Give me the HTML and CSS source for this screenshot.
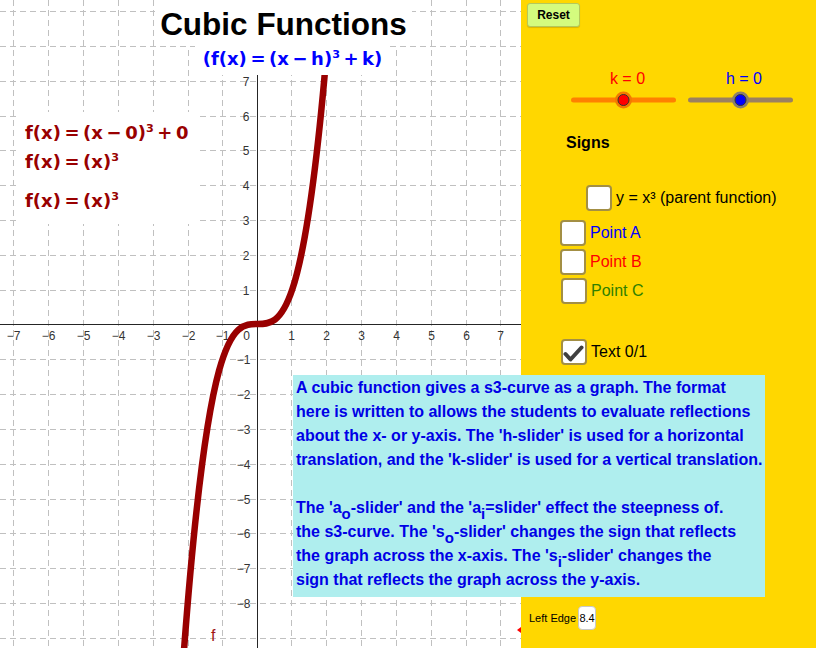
FILE: index.html
```html
<!DOCTYPE html>
<html>
<head>
<meta charset="utf-8">
<title>Cubic Functions</title>
<link rel="stylesheet" href="styles.css">
</head>
<body>
<div class="app">
  <div class="graph">
    <svg class="canvas" width="521" height="648" viewBox="0 0 521 648">
      <g class="grid">
        <line x1="13.5" y1="0" x2="13.5" y2="648"/>
        <line x1="48.5" y1="0" x2="48.5" y2="648"/>
        <line x1="83.5" y1="0" x2="83.5" y2="648"/>
        <line x1="118.5" y1="0" x2="118.5" y2="648"/>
        <line x1="153.5" y1="0" x2="153.5" y2="648"/>
        <line x1="188.5" y1="0" x2="188.5" y2="648"/>
        <line x1="222.5" y1="0" x2="222.5" y2="648"/>
        <line x1="291.5" y1="0" x2="291.5" y2="648"/>
        <line x1="326.5" y1="0" x2="326.5" y2="648"/>
        <line x1="361.5" y1="0" x2="361.5" y2="648"/>
        <line x1="396.5" y1="0" x2="396.5" y2="648"/>
        <line x1="431.5" y1="0" x2="431.5" y2="648"/>
        <line x1="466.5" y1="0" x2="466.5" y2="648"/>
        <line x1="500.5" y1="0" x2="500.5" y2="648"/>
        <line x1="0" y1="11.5" x2="521" y2="11.5"/>
        <line x1="0" y1="46.5" x2="521" y2="46.5"/>
        <line x1="0" y1="81.5" x2="521" y2="81.5"/>
        <line x1="0" y1="116.5" x2="521" y2="116.5"/>
        <line x1="0" y1="150.5" x2="521" y2="150.5"/>
        <line x1="0" y1="185.5" x2="521" y2="185.5"/>
        <line x1="0" y1="220.5" x2="521" y2="220.5"/>
        <line x1="0" y1="255.5" x2="521" y2="255.5"/>
        <line x1="0" y1="290.5" x2="521" y2="290.5"/>
        <line x1="0" y1="359.5" x2="521" y2="359.5"/>
        <line x1="0" y1="394.5" x2="521" y2="394.5"/>
        <line x1="0" y1="429.5" x2="521" y2="429.5"/>
        <line x1="0" y1="464.5" x2="521" y2="464.5"/>
        <line x1="0" y1="499.5" x2="521" y2="499.5"/>
        <line x1="0" y1="533.5" x2="521" y2="533.5"/>
        <line x1="0" y1="568.5" x2="521" y2="568.5"/>
        <line x1="0" y1="603.5" x2="521" y2="603.5"/>
        <line x1="0" y1="638.5" x2="521" y2="638.5"/>
      </g>
      <g class="axes">
        <line x1="0" y1="324.5" x2="521" y2="324.5"/>
        <line x1="257.5" y1="0" x2="257.5" y2="648"/>
      </g>
      <g class="xlabels">
        <text x="13.5" y="340">−7</text>
        <text x="48.5" y="340">−6</text>
        <text x="83.5" y="340">−5</text>
        <text x="118.5" y="340">−4</text>
        <text x="153.5" y="340">−3</text>
        <text x="188.5" y="340">−2</text>
        <text x="222.5" y="340">−1</text>
        <text x="246.5" y="340">0</text>
        <text x="291.5" y="340">1</text>
        <text x="326.5" y="340">2</text>
        <text x="361.5" y="340">3</text>
        <text x="396.5" y="340">4</text>
        <text x="431.5" y="340">5</text>
        <text x="466.5" y="340">6</text>
        <text x="500.5" y="340">7</text>
      </g>
      <g class="ylabels">
        <text x="249.5" y="86">7</text>
        <text x="249.5" y="121">6</text>
        <text x="249.5" y="155">5</text>
        <text x="249.5" y="190">4</text>
        <text x="249.5" y="225">3</text>
        <text x="249.5" y="260">2</text>
        <text x="249.5" y="295">1</text>
        <text x="250.5" y="364">−1</text>
        <text x="250.5" y="399">−2</text>
        <text x="250.5" y="434">−3</text>
        <text x="250.5" y="469">−4</text>
        <text x="250.5" y="504">−5</text>
        <text x="250.5" y="538">−6</text>
        <text x="250.5" y="573">−7</text>
        <text x="250.5" y="608">−8</text>
      </g>
      <path class="curve" d="M180.72 695.6 C229.58 -13.8 278.44 631.1 327.3 44.8"/>
      <text class="flabel" x="211" y="641">f</text>
      <path class="marker" d="M517 630 L521 627 L521 633 Z"/>
    </svg>

    <div class="title">Cubic Functions</div>
    <div class="main-formula">(f(x) = (x − h)<sup>3</sup> + k)</div>
    <div class="formulas">
      <div class="fline">f(x) = (x − 0)<sup>3</sup> + 0</div>
      <div class="fline">f(x) = (x)<sup>3</sup></div>
      <div class="fline third">f(x) = (x)<sup>3</sup></div>
    </div>
  </div>

  <div class="panel">
    <button class="reset">Reset</button>
    <div class="sliders">
      <div class="slider">
        <div class="slabel k">k = 0</div>
        <svg class="track" width="105" height="24" viewBox="0 0 105 24">
          <line class="k-line" x1="2.5" y1="12" x2="102.5" y2="12"/>
          <circle class="k-halo" cx="52.5" cy="12" r="8.5"/>
          <circle class="k-dot" cx="52.5" cy="12" r="5.5"/>
        </svg>
      </div>
      <div class="slider">
        <div class="slabel h">h = 0</div>
        <svg class="track" width="105" height="24" viewBox="0 0 105 24">
          <line class="h-line" x1="2.5" y1="12" x2="102.5" y2="12"/>
          <circle class="h-halo" cx="52.5" cy="12" r="8.5"/>
          <circle class="h-dot" cx="52.5" cy="12" r="5.5"/>
        </svg>
      </div>
    </div>
    <div class="signs">Signs</div>

    <div class="row parent"><span class="cb"></span><span class="lbl">y = x³ (parent function)</span></div>
    <div class="row pa"><span class="cb"></span><span class="lbl blue">Point A</span></div>
    <div class="row pb"><span class="cb"></span><span class="lbl red">Point B</span></div>
    <div class="row pc"><span class="cb"></span><span class="lbl green">Point C</span></div>
    <div class="row ptext"><span class="cb"><svg width="22" height="22" viewBox="0 0 22 22"><polyline points="2.5,13 7.5,18.5 18.5,6.5"/></svg></span><span class="lbl">Text 0/1</span></div>

    <div class="edge-row"><span>Left Edge</span><span class="edge-input">8.4</span></div>
  </div>

  <div class="info">
    A cubic function gives a s3-curve as a graph. The format<br>
    here is written to allows the students to evaluate reflections<br>
    about the x- or y-axis. The 'h-slider' is used for a horizontal<br>
    translation, and the 'k-slider' is used for a vertical translation.<br>
    <br>
    The 'a<sub>o</sub>-slider' and the 'a<sub>i</sub>=slider' effect the steepness of.<br>
    the s3-curve. The 's<sub>o</sub>-slider' changes the sign that reflects<br>
    the graph across the x-axis. The 's<sub>i</sub>-slider' changes the<br>
    sign that reflects the graph across the y-axis.
  </div>
</div>
</body>
</html>
```
FILE: styles.css
```css
body {
  margin: 0;
}

.app {
  position: relative;
  width: 816px;
  height: 648px;
  display: flex;
  overflow: hidden;
  font-family: "Liberation Sans", Arial, sans-serif;
}

.graph {
  position: relative;
  width: 521px;
  height: 648px;
  flex: none;
  background: #fff;
}

.canvas {
  display: block;
}

.grid line {
  stroke: #c0c0c0;
  stroke-width: 1;
  stroke-dasharray: 6 4;
  shape-rendering: crispEdges;
}

.axes line {
  stroke: #252525;
  stroke-width: 1;
  shape-rendering: crispEdges;
}

.xlabels text,
.ylabels text {
  font-family: "Liberation Sans", Arial, sans-serif;
  font-size: 12px;
  fill: #333;
}

.xlabels text {
  text-anchor: middle;
}

.ylabels text {
  text-anchor: end;
}

.curve {
  fill: none;
  stroke: #990000;
  stroke-width: 6.5;
}

.flabel {
  font-family: "Liberation Sans", Arial, sans-serif;
  font-size: 16px;
  fill: #a11616;
}

.marker {
  fill: #ff0000;
}

.title {
  position: absolute;
  left: 155px;
  top: 0;
  width: 257px;
  height: 46px;
  box-sizing: border-box;
  padding-top: 6px;
  background: #fff;
  text-align: center;
  font-weight: bold;
  font-size: 31.5px;
  line-height: 36px;
  color: #000;
  white-space: nowrap;
}

.main-formula {
  position: absolute;
  left: 195px;
  top: 44px;
  width: 195px;
  height: 31px;
  background: #fff;
  color: #0000ff;
  font-family: "DejaVu Sans", sans-serif;
  font-weight: bold;
  font-size: 18px;
  word-spacing: -0.15em;
  line-height: 29px;
  text-align: center;
  white-space: nowrap;
}

sup {
  font-size: 0.62em;
  line-height: 0;
  vertical-align: 0.62em;
}

.formulas {
  position: absolute;
  left: 16px;
  top: 112px;
  width: 180px;
  height: 112px;
  box-sizing: border-box;
  padding: 6px 0 0 9px;
  background: #fff;
  color: #990000;
  font-family: "DejaVu Sans", sans-serif;
  font-weight: bold;
  font-size: 18px;
  word-spacing: -0.15em;
  white-space: nowrap;
}

.fline {
  line-height: 29px;
}

.fline.third {
  margin-top: 10px;
}

.panel {
  width: 295px;
  height: 648px;
  flex: none;
  box-sizing: border-box;
  padding: 3px 0 0 6px;
  background: #ffd700;
  display: flex;
  flex-direction: column;
  align-items: flex-start;
}

.reset {
  width: 53px;
  height: 24px;
  margin: 0;
  padding: 0;
  border: 1px solid #b4c85a;
  border-radius: 3px;
  background: #d4fb7e;
  box-shadow: 0 1px 1px rgba(0, 0, 0, 0.15);
  font-family: "Liberation Sans", Arial, sans-serif;
  font-weight: bold;
  font-size: 12px;
  color: #000;
}

.sliders {
  display: flex;
  gap: 12px;
  margin: 43px 0 0 44px;
}

.slider {
  display: flex;
  flex-direction: column;
  align-items: center;
  width: 105px;
}

.slabel {
  font-size: 16px;
  line-height: 18px;
}

.slabel.k {
  color: #ff0000;
  margin-left: 8px;
}

.slabel.h {
  color: #0000ff;
  margin-left: 7px;
}

.track {
  display: block;
}

.k-line,
.h-line {
  stroke-width: 5;
  stroke-linecap: round;
}

.k-line {
  stroke: #ff8000;
}

.h-line {
  stroke: #9b8060;
}

.k-halo {
  fill: #f27a00;
}

.h-halo {
  fill: #8a7f6c;
}

.k-dot,
.h-dot {
  stroke: #333;
  stroke-width: 1;
}

.k-dot {
  fill: #ff0000;
}

.h-dot {
  fill: #0000ff;
}

.signs {
  margin: 22px 0 0 39px;
  font-weight: bold;
  font-size: 16px;
  line-height: 18px;
  color: #000;
}

.row {
  display: flex;
  align-items: center;
  gap: 4px;
}

.row.parent {
  margin: 33px 0 0 59px;
}

.row.pa {
  margin: 9px 0 0 33px;
}

.row.pb {
  margin: 3px 0 0 33px;
}

.row.pc {
  margin: 3px 0 0 34px;
}

.row.ptext {
  margin: 35px 0 0 34px;
}

.cb {
  width: 26px;
  height: 26px;
  box-sizing: border-box;
  border: 2px solid #a38f44;
  border-radius: 4px;
  background: #fff;
  display: flex;
}

.cb svg {
  display: block;
}

.cb polyline {
  fill: none;
  stroke: #404040;
  stroke-width: 4;
  stroke-linecap: round;
  stroke-linejoin: round;
}

.lbl {
  font-size: 16px;
  line-height: 20px;
  color: #000;
  white-space: nowrap;
}

.lbl.blue {
  color: #0000ff;
}

.lbl.red {
  color: #ff0000;
}

.lbl.green {
  color: #308000;
}

.edge-row {
  margin: auto 0 18px 2px;
  display: flex;
  align-items: center;
  gap: 2px;
  font-size: 11px;
  color: #000;
}

.edge-input {
  width: 18px;
  height: 24px;
  box-sizing: border-box;
  border: 1px solid #c8c8c8;
  border-radius: 4px;
  background: #fff;
  display: flex;
  align-items: center;
  justify-content: center;
  font-size: 11px;
}

.info {
  position: absolute;
  left: 293px;
  top: 375px;
  width: 472px;
  height: 222px;
  box-sizing: border-box;
  padding: 1px 0 0 3px;
  background: #afeeee;
  color: #0000e6;
  font-weight: bold;
  font-size: 16px;
  line-height: 24px;
  white-space: nowrap;
}

.info sub {
  font-size: 15px;
  line-height: 0;
  vertical-align: -0.4em;
}
```
